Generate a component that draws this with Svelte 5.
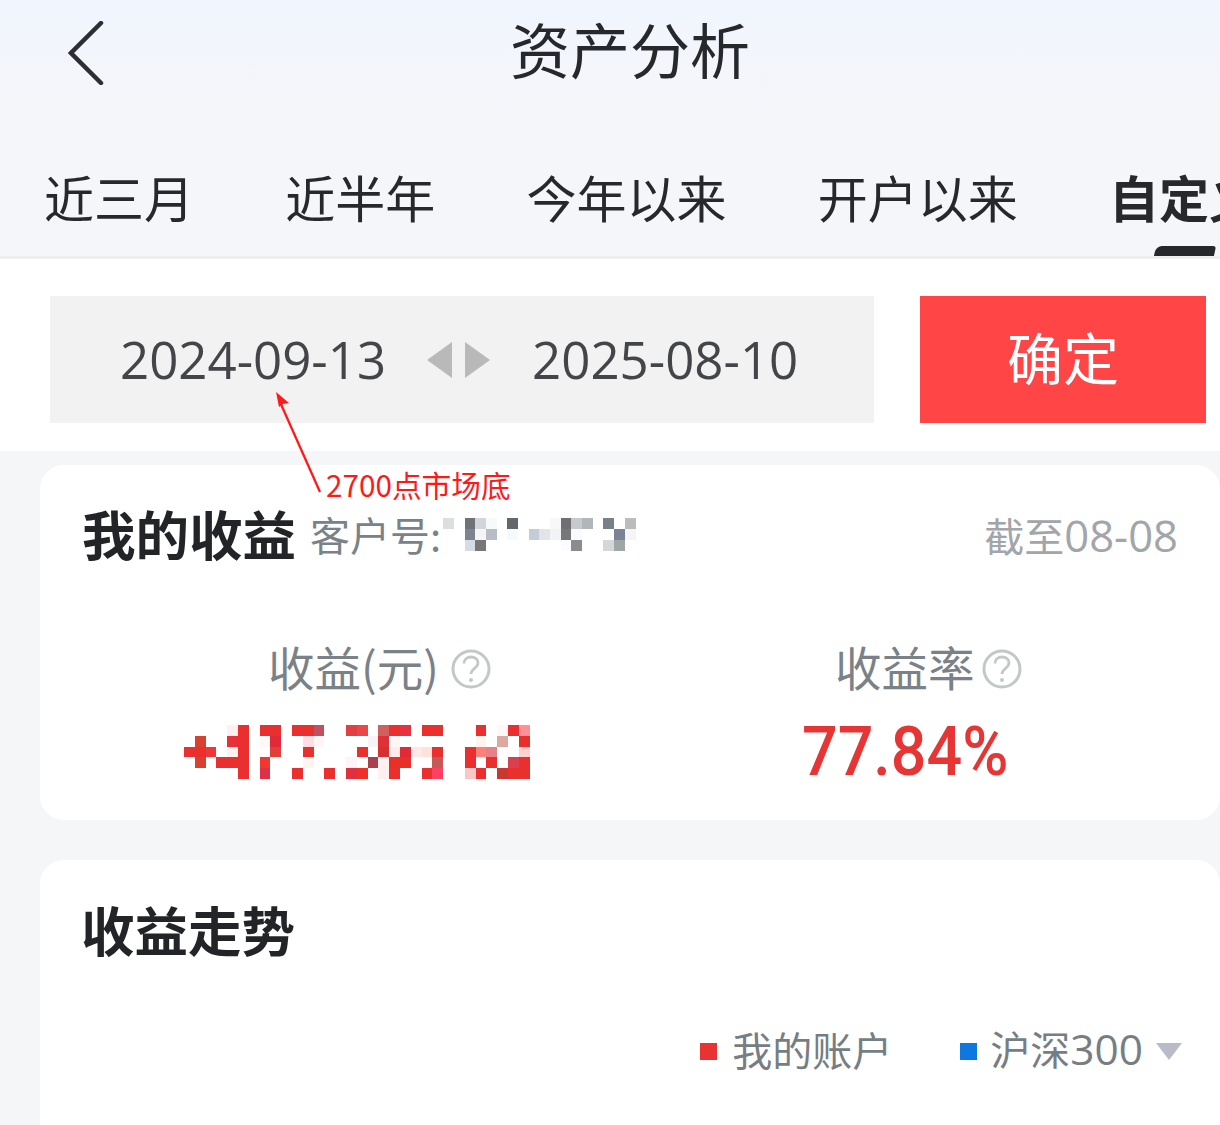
<script>
	const tabs = ['近三月', '近半年', '今年以来', '开户以来', '自定义']

	const R = '#e9302f'
	// [col, row, colour] of the pixelated amount
	const amountCells = [
		[4,0,'#fff0f0'],[5,0,R],[7,0,R],[8,0,R],[10,0,R],[11,0,R],[12,0,'#c05060'],[15,0,'#e04040'],[16,0,'#e84848'],[18,0,'#d06060'],[19,0,R],[20,0,'#e83040'],[22,0,R],[23,0,R],[27,0,R],[29,0,'#fdf8f5'],[30,0,R],[31,0,'#ff9098'],
		[1,1,'#d84030'],[4,1,'#e83038'],[5,1,R],[7,1,'#fff8f8'],[8,1,'#e02a3a'],[11,1,'#ffdde2'],[12,1,'#fff5f5'],[17,1,'#f6f4f6'],[18,1,'#e03038'],[19,1,'#fff5f5'],[27,1,'#fff5ee'],[29,1,'#dca8a0'],[31,1,'#e8302a'],
		[0,2,R],[1,2,R],[2,2,'#ee3838'],[4,2,'#fff0f2'],[5,2,R],[8,2,'#e04038'],[11,2,R],[16,2,R],[18,2,'#d83030'],[19,2,'#fdeaea'],[20,2,'#e02a38'],[21,2,'#fde8e8'],[22,2,'#fde2dc'],[23,2,R],[26,2,R],[27,2,'#ff8078'],[28,2,'#e88088'],[31,2,'#ffd0d0'],
		[1,3,'#d84030'],[3,3,R],[4,3,R],[5,3,R],[7,3,'#f03830'],[11,3,'#fff5f0'],[15,3,'#fff4f6'],[17,3,'#a84050'],[18,3,'#fff0f2'],[19,3,'#e83028'],[20,3,'#e83028'],[23,3,'#c85858'],[26,3,R],[28,3,R],[30,3,'#d84050'],[31,3,R],
		[5,4,R],[7,4,'#e03048'],[10,4,R],[13,4,R],[15,4,'#e03040'],[16,4,'#f03028'],[18,4,'#fff0f0'],[19,4,R],[22,4,R],[23,4,'#ff4060'],[26,4,'#f8c8c8'],[27,4,R],[29,4,'#c83830'],[30,4,R],[31,4,R]
	]

	// [col, row, colour] of the pixelated customer number
	const idCells = [
		[0,0,'#dcdfe0'],[2,0,'#6f7378'],[3,0,'#d2d6da'],[4,0,'#f8fafa'],[6,0,'#63676c'],[10,0,'#f8f8fa'],[11,0,'#707070'],[12,0,'#c6cace'],[13,0,'#b0b6ba'],[15,0,'#7a8088'],[17,0,'#bcbcbc'],
		[2,1,'#7a8590'],[3,1,'#f5f5f5'],[4,1,'#b8bcc6'],[6,1,'#f6fafd'],[8,1,'#c4ccd6'],[9,1,'#e2e4e8'],[10,1,'#f2f3f7'],[11,1,'#777777'],[12,1,'#f8fafc'],[16,1,'#7a8298'],[17,1,'#f5f5f5'],
		[2,2,'#d5dce6'],[3,2,'#777777'],[11,2,'#fafcff'],[12,2,'#8c8c90'],[15,2,'#d4d6d8'],[16,2,'#9fa6a6']
	]
</script>

{#snippet help()}
	<svg class="help" viewBox="0 0 40 40" aria-hidden="true">
		<circle cx="20" cy="20" r="18" fill="none" stroke="#c4c7c9" stroke-width="3" />
		<path d="M13 14.500c0-4 3-6.500 7-6.500s7 2.500 7 6c0 5-7 5.500-7 11" fill="none" stroke="#c4c7c9" stroke-width="2.8" />
		<circle cx="20" cy="31" r="2" fill="#c4c7c9" />
	</svg>
{/snippet}

<div class="page">
	<header>
		<div class="nav">
			<svg class="back" viewBox="0 0 36 64" aria-hidden="true">
				<path d="M33 2 L3 32 L33 62" fill="none" stroke="#2c2e31" stroke-width="4.500" stroke-linecap="round" />
			</svg>
			<h1>资产分析</h1>
		</div>
		<div class="tabs">
			{#each tabs as tab, i}
				<span class="tab" class:active={i === tabs.length - 1}>{tab}</span>
			{/each}
		</div>
	</header>

	<section class="range">
		<div class="dates">
			<span>2024-09-13</span>
			<span class="arrows">
				<i class="tri left"></i>
				<i class="tri right"></i>
			</span>
			<span>2025-08-10</span>
		</div>
		<button>确定</button>
	</section>

	<section class="card summary">
		<div class="head">
			<h2>我的收益</h2>
			<span class="cust">客户号:</span>
			<div class="mosaic id">
				{#each idCells as [c, r, bg]}
					<i style:grid-column={c + 1} style:grid-row={r + 1} style:background={bg}></i>
				{/each}
			</div>
			<span class="asof">截至<span class="num">08-08</span></span>
		</div>
		<div class="metrics">
			<div class="metric first">
				<div class="label">收益(元){@render help()}</div>
				<div class="mosaic amount">
					{#each amountCells as [c, r, bg]}
						<i style:grid-column={c + 1} style:grid-row={r + 1} style:background={bg}></i>
					{/each}
				</div>
			</div>
			<div class="metric second">
				<div class="label">收益率{@render help()}</div>
				<div class="value">77.84%</div>
			</div>
		</div>
	</section>

	<section class="card trend">
		<h2>收益走势</h2>
		<div class="legend">
			<i class="dot red"></i><span>我的账户</span>
			<i class="dot blue"></i><span>沪深<span class="num">300</span></span>
			<i class="caret"></i>
		</div>
	</section>

	<svg class="pointer" viewBox="0 0 60 110" aria-hidden="true">
		<path d="M46 104 L6 14" fill="none" stroke="#ff1a1a" stroke-width="2.300" />
		<path d="M2 4 L15 15 L9 16 L5 19 Z" fill="#ff1a1a" />
	</svg>
	<span class="note">2700点市场底</span>
</div>

<style>
	:global(body) {
		margin: 0;
	}

	.page {
		position: relative;
		height: 1125px;
		overflow: hidden;
		background: #f5f6f8;
		font-family: 'Noto Sans CJK SC', 'Liberation Sans', sans-serif;
	}

	header {
		height: 256px;
		border-bottom: 3px solid #eeeeef;
		background: linear-gradient(#f1f5fe, #f5f6f9 120px);
		overflow: hidden;
	}

	.nav {
		position: relative;
		display: flex;
		justify-content: center;
		height: 96px;
		align-items: center;
		padding-left: 40px;
	}

	.back {
		position: absolute;
		left: 68px;
		top: 21px;
		width: 36px;
		height: 64px;
	}

	h1 {
		margin: 0;
		font-size: 60px;
		font-weight: 400;
		line-height: 96px;
		color: #26282b;
	}

	.tabs {
		display: flex;
		gap: 91.250px;
		padding: 45px 0 0 44px;
		white-space: nowrap;
		font-size: 50px;
		line-height: 110px;
		height: 115px;
		color: #26282b;
	}

	.tab {
		position: relative;
		flex: none;
	}

	.tab.active {
		font-weight: 700;
	}

	.tab.active::after {
		content: '';
		position: absolute;
		left: 46px;
		top: 105px;
		width: 60px;
		height: 10px;
		background: #25272b;
		border-radius: 6px 3px 0 0;
		transform: skewX(-12deg);
	}

	.range {
		display: flex;
		gap: 46px;
		height: 127px;
		padding: 37px 14px 28px 50px;
		background: #fff;
	}

	.dates {
		flex: 1;
		display: flex;
		align-items: center;
		padding: 0 0 2px 70px;
		background: #f2f2f2;
		font-family: 'Open Sans', sans-serif;
		font-size: 51px;
		color: #444548;
	}

	.arrows {
		display: flex;
		gap: 13px;
		margin: 2px 42px 0 41px;
	}

	.tri {
		width: 0;
		height: 0;
		border-top: 18px solid transparent;
		border-bottom: 18px solid transparent;
	}

	.tri.left {
		border-right: 25px solid #b9b9b9;
	}

	.tri.right {
		border-left: 25px solid #b9b9b9;
	}

	button {
		width: 286px;
		border: none;
		background: #ff4545;
		color: #fff;
		font-family: inherit;
		font-size: 56px;
		padding: 0 0 8px;
	}

	.card {
		margin-left: 40px;
		background: #fff;
		border-radius: 24px;
	}

	.summary {
		margin-top: 14px;
		height: 355px;
		padding: 0 42px;
	}

	.head {
		display: flex;
		align-items: center;
		height: 134px;
		margin-bottom: 42px;
	}

	h2 {
		margin: 0;
		font-size: 53.500px;
		font-weight: 700;
		color: #222427;
	}

	.cust {
		margin-left: 14px;
		margin-top: 3px;
		font-size: 40px;
		color: #7a8288;
	}

	.mosaic {
		display: grid;
	}

	.id {
		margin-left: 2px;
		margin-top: 4px;
		grid-template-columns: repeat(18, 10.700px);
		grid-template-rows: repeat(3, 11px);
	}

	.asof {
		margin-left: auto;
		margin-top: 6px;
		font-size: 40px;
		color: #a2a5a9;
	}

	.num {
		font-family: 'Open Sans', sans-serif;
		font-size: 1.060em;
	}

	.asof .num {
		font-size: 1.090em;
	}

	.metrics {
		display: flex;
	}

	.metric {
		display: flex;
		flex-direction: column;
	}

	.first {
		width: 620px;
		align-items: flex-start;
		padding-left: 102px;
		box-sizing: border-box;
	}

	.second {
		padding-left: 100px;
	}

	.label {
		display: flex;
		align-items: center;
		gap: 12px;
		font-size: 46.500px;
		line-height: 50px;
		color: #7a8288;
		margin-left: 84px;
	}

	.second .label {
		margin-left: 33px;
		gap: 7px;
	}

	.help {
		width: 40px;
		height: 40px;
		margin-top: 6px;
	}

	.amount {
		margin-top: 34px;
		grid-template-columns: repeat(32, 10.800px);
		grid-template-rows: repeat(5, 10.800px);
	}

	.value {
		margin-top: 21px;
		font-family: Roboto, sans-serif;
		font-size: 69px;
		line-height: 80px;
		font-weight: 500;
		color: #e63535;
		transform: scaleX(0.91);
		transform-origin: left;
	}

	.trend {
		margin-top: 40px;
		height: 300px;
		padding: 0 42px;
	}

	.trend h2 {
		margin-left: -1px;
		line-height: 138px;
	}

	.legend {
		display: flex;
		align-items: center;
		justify-content: flex-end;
		margin-top: 25px;
		font-size: 40px;
		line-height: 50px;
		color: #767e84;
	}

	.dot {
		width: 17px;
		height: 17px;
		margin-top: 6px;
		margin-right: 15px;
	}

	.red {
		background: #e93333;
	}

	.blue {
		margin-left: 68px;
		margin-right: 13px;
		background: #0f78e0;
	}

	.caret {
		margin-left: 13px;
		margin-right: -4px;
		margin-top: 6px;
		width: 0;
		height: 0;
		border-left: 13px solid transparent;
		border-right: 13px solid transparent;
		border-top: 17px solid #b9bcc8;
	}

	/* hand-drawn note laid over the screenshot */
	.pointer {
		position: absolute;
		left: 274px;
		top: 388px;
		width: 60px;
		height: 110px;
	}

	.note {
		position: absolute;
		left: 326px;
		top: 463px;
		font-size: 29.700px;
		line-height: 44px;
		color: #ff1a1a;
	}
</style>
